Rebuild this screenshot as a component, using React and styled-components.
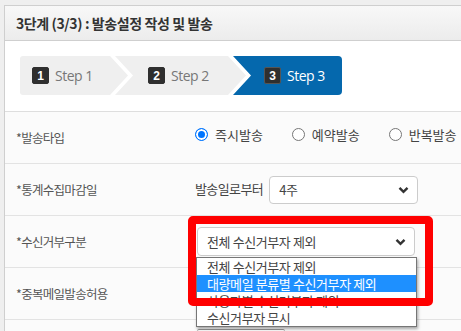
import React from "react";
import styled, { createGlobalStyle } from "styled-components";

const Global = createGlobalStyle`
  html, body { margin: 0; padding: 0; }
  body {
    background: #efefef;
    font-family: "Noto Sans CJK KR", "Noto Sans", sans-serif;
    overflow: hidden;
    width: 461px;
    height: 331px;
  }
`;

const Page = styled.div`
  padding: 5px 0 0 4px;
`;

const Panel = styled.div`
  width: 560px;
  border: 1px solid #cfcfcf;
  background: #fff;
`;

const PanelHeader = styled.div`
  height: 34px;
  display: flex;
  align-items: center;
  padding-left: 11px;
  background: linear-gradient(#f8f8f8, #ececec);
  border-bottom: 1px solid #cfcfcf;
  color: #333;
  font-size: 14px;
  font-weight: 700;
  letter-spacing: -0.4px;
`;

const StepsArea = styled.div`
  padding: 15px 15px 16px 15px;
  border-bottom: 1px solid #dedede;
  background: #fff;
`;

const Steps = styled.div`
  display: flex;
  height: 39px;
`;

const Step = styled.div`
  height: 39px;
  width: ${(p) => p.$w}px;
  margin-left: ${(p) => p.$ml || 0}px;
  padding-left: ${(p) => p.$pl}px;
  box-sizing: border-box;
  display: flex;
  align-items: center;
  gap: 6px;
  background: ${(p) => (p.$active ? "#0568ad" : "#efefef")};
  color: ${(p) => (p.$active ? "#fff" : "#777")};
  clip-path: ${(p) => p.$clip};
  border-radius: ${(p) => p.$radius};
  font-family: "Open Sans", "Noto Sans", sans-serif;
  font-size: 14px;
  letter-spacing: -0.5px;
`;

const Badge = styled.span`
  width: 17px;
  height: 17px;
  box-sizing: border-box;
  border-radius: 2px;
  background: #2f2f2f;
  border: 1px solid ${(p) => (p.$active ? "#555" : "#2f2f2f")};
  color: #fff;
  font-family: "Liberation Sans", sans-serif;
  font-weight: 700;
  font-size: 12px;
  display: flex;
  align-items: center;
  justify-content: center;
  letter-spacing: 0;
`;

const Row = styled.div`
  display: grid;
  grid-template-columns: 179px 1fr;
  height: 51px;
  border-bottom: 1px solid #e3e3e3;
  background: #fbfbfb;
`;

const Label = styled.div`
  display: flex;
  align-items: center;
  padding-left: 11px;
  color: #555;
  font-size: 12.5px;
  letter-spacing: -0.7px;
`;

const Cell = styled.div`
  position: relative;
  display: flex;
  align-items: center;
  padding-left: ${(p) => p.$pl || 11}px;
  gap: 6px;
  color: #444;
  font-size: 13px;
`;

const RadioGroup = styled.label`
  display: flex;
  align-items: center;
  gap: 7px;
  margin-right: 23px;
  margin-top: -7px;
  color: #444;
  font-size: 13px;
  letter-spacing: 0;
  white-space: nowrap;
`;

const Radio = styled.span`
  width: 13px;
  height: 13px;
  box-sizing: border-box;
  border-radius: 50%;
  border: 1px solid ${(p) => (p.$checked ? "#0075ff" : "#767676")};
  background: ${(p) => (p.$checked ? "#0075ff" : "#fff")};
  box-shadow: ${(p) => (p.$checked ? "inset 0 0 0 2px #fff" : "none")};
  flex: none;
`;

const Prefix = styled.span`
  letter-spacing: -0.6px;
  margin-top: -3px;
`;

const SelectBox = styled.div`
  position: relative;
  width: ${(p) => p.$w}px;
  height: ${(p) => p.$h}px;
  box-sizing: border-box;
  border: 1px solid #cccccc;
  border-radius: 4px;
  background: #fff;
  display: flex;
  align-items: center;
  justify-content: space-between;
  padding: 0 8px 0 9px;
  color: #444;
  font-size: 13px;
  letter-spacing: -0.4px;
`;

const Chevron = () => (
  <svg width="11" height="8" viewBox="0 0 11 8">
    <polyline points="1.5,1.8 5.5,5.8 9.5,1.8" fill="none" stroke="#333" strokeWidth="2.4" />
  </svg>
);

const DropList = styled.ul`
  position: absolute;
  left: -1px;
  top: 30px;
  width: 219px;
  margin: 0;
  padding: 0;
  list-style: none;
  background: #fff;
  border: 1px solid #767676;
  box-shadow: 1px 2px 3px rgba(0, 0, 0, 0.35);
  z-index: 2;
`;

const Option = styled.li`
  height: 17px;
  line-height: 17px;
  padding-left: 10px;
  font-size: 13px;
  letter-spacing: -0.4px;
  color: ${(p) => (p.$sel ? "#fff" : "#444")};
  background: ${(p) => (p.$sel ? "#1e90ff" : "#fff")};
  white-space: nowrap;
`;

const Highlight = styled.div`
  position: absolute;
  left: -9px;
  top: -11px;
  width: 245px;
  height: 90px;
  box-sizing: border-box;
  border: 8px solid #ff0000;
  border-radius: 5px;
  z-index: 3;
  pointer-events: none;
`;

const Anchor = styled.div`
  position: relative;
`;

const LastRow = styled.div`
  display: grid;
  grid-template-columns: 179px 1fr;
  height: 20px;
  background: #fbfbfb;
`;

const Stub = styled.div`
  margin: 9px 0 0 13px;
  width: 86px;
  height: 10px;
  border-top: 1px solid #999;
  border-left: 1px solid #bbb;
  border-right: 1px solid #bbb;
  border-radius: 2px 2px 0 0;
  background: #fff;
`;

export default function App() {
  return (
    <>
      <Global />
      <Page>
        <Panel>
          <PanelHeader>3단계 (3/3) : 발송설정 작성 및 발송</PanelHeader>
          <StepsArea>
            <Steps>
              <Step
                $w={108}
                $pl={12}
                $radius="3px 0 0 3px"
                $clip="polygon(0 0, 90px 0, 108px 50%, 90px 100%, 0 100%)"
              >
                <Badge>1</Badge>Step 1
              </Step>
              <Step
                $w={131}
                $ml={-13}
                $pl={33}
                $clip="polygon(0 0, 113px 0, 131px 50%, 113px 100%, 0 100%, 18px 50%)"
              >
                <Badge>2</Badge>Step 2
              </Step>
              <Step
                $w={109}
                $ml={-13}
                $pl={31}
                $active
                $radius="0 4px 4px 0"
                $clip="polygon(0 0, 100% 0, 100% 100%, 0 100%, 18px 50%)"
              >
                <Badge $active>3</Badge>Step 3
              </Step>
            </Steps>
          </StepsArea>

          <Row>
            <Label>*발송타입</Label>
            <Cell $pl={11}>
              <RadioGroup>
                <Radio $checked />
                즉시발송
              </RadioGroup>
              <RadioGroup>
                <Radio />
                예약발송
              </RadioGroup>
              <RadioGroup>
                <Radio />
                반복발송
              </RadioGroup>
            </Cell>
          </Row>

          <Row>
            <Label>*통계수집마감일</Label>
            <Cell $pl={11}>
              <Prefix>발송일로부터</Prefix>
              <SelectBox $w={149} $h={28}>
                4주
                <Chevron />
              </SelectBox>
            </Cell>
          </Row>

          <Row>
            <Label>*수신거부구분</Label>
            <Cell $pl={13}>
              <Anchor>
                <SelectBox $w={218} $h={29}>
                  전체 수신거부자 제외
                  <Chevron />
                </SelectBox>
                <DropList>
                  <Option>전체 수신거부자 제외</Option>
                  <Option $sel>대량메일 분류별 수신거부자 제외</Option>
                  <Option>사용자별 수신거부자 제외</Option>
                  <Option>수신거부자 무시</Option>
                </DropList>
                <Highlight />
              </Anchor>
            </Cell>
          </Row>

          <Row>
            <Label>*중복메일발송허용</Label>
            <Cell />
          </Row>

          <LastRow>
            <div />
            <Stub />
          </LastRow>
        </Panel>
      </Page>
    </>
  );
}
